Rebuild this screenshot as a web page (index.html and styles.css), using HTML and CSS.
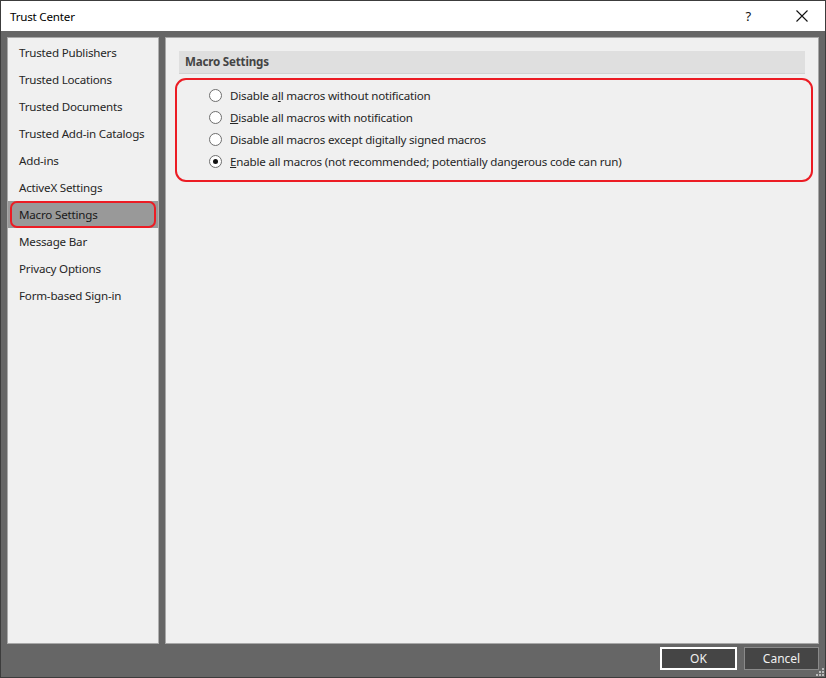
FILE: index.html
```html
<!DOCTYPE html>
<html>
<head>
<meta charset="utf-8">
<link rel="stylesheet" href="styles.css">
</head>
<body>
<div class="window">
  <div class="titlebar">
    <span class="title">Trust Center</span>
    <span class="tb-btns"><span class="help">?</span><svg class="close" width="12" height="12" viewBox="0 0 12 12"><path d="M0.5 0.5L11.5 11.5M11.5 0.5L0.5 11.5" stroke="#111" stroke-width="1.1"/></svg></span>
  </div>
  <div class="body">
    <div class="panes">
      <ul class="nav">
        <li>Trusted Publishers</li>
        <li>Trusted Locations</li>
        <li>Trusted Documents</li>
        <li>Trusted Add-in Catalogs</li>
        <li>Add-ins</li>
        <li>ActiveX Settings</li>
        <li class="sel"><span class="mark"></span>Macro Settings</li>
        <li>Message Bar</li>
        <li>Privacy Options</li>
        <li>Form-based Sign-in</li>
      </ul>
      <div class="content">
        <div class="section-head">Macro Settings</div>
        <div class="options">
          <label class="opt"><span class="radio"></span>Disable a<u>l</u>l macros without notification</label>
          <label class="opt"><span class="radio"></span><u>D</u>isable all macros with notification</label>
          <label class="opt"><span class="radio"></span>Disable all macros except digitally signed macros</label>
          <label class="opt"><span class="radio on"></span><u>E</u>nable all macros (not recommended; potentially dangerous code can run)</label>
        </div>
      </div>
    </div>
    <div class="footer">
      <button class="btn ok">OK</button>
      <button class="btn">Cancel</button>
    </div>
    <svg class="grip" width="8" height="8" viewBox="0 0 8 8"><g fill="#bbb"><rect x="6" y="0" width="2" height="2"/><rect x="3" y="3" width="2" height="2"/><rect x="6" y="3" width="2" height="2"/><rect x="0" y="6" width="2" height="2"/><rect x="3" y="6" width="2" height="2"/><rect x="6" y="6" width="2" height="2"/></g></svg>
  </div>
</div>
</body>
</html>
```

FILE: styles.css
```css
html, body {
  margin: 0;
  padding: 0;
}
body {
  font-family: "Segoe UI", "Noto Sans", "Open Sans", sans-serif;
  font-size: 11.6px;
  letter-spacing: -0.2px;
  color: #262626;
}
.window {
  width: 826px;
  height: 678px;
  box-sizing: border-box;
  border: 1px solid #3c3c3c;
  display: flex;
  flex-direction: column;
  background: #666;
}
.titlebar {
  height: 30px;
  background: #fff;
  display: flex;
  align-items: center;
  justify-content: space-between;
  padding-left: 9px;
  padding-right: 17px;
  flex: none;
}
.title {
  font-size: 11.6px;
  color: #000;
}
.tb-btns {
  display: flex;
  align-items: center;
  gap: 45px;
}
.help {
  font-size: 13px;
  color: #111;
}
.body {
  flex: 1;
  position: relative;
  background: #666;
  padding: 6px 6px 0 6px;
  display: flex;
  flex-direction: column;
}
.panes {
  display: flex;
  gap: 6px;
  height: 607px;
}
.nav {
  list-style: none;
  margin: 0;
  padding: 1px 0 0 0;
  width: 150px;
  background: #f0f0f0;
  border: 1px solid #a8a8a8;
  border-right-color: #b0b0b0;
}
.nav li {
  height: 27px;
  line-height: 27px;
  padding-left: 11px;
  position: relative;
}
.nav li.sel {
  background: #999;
  color: #1a1a1a;
}
.mark {
  position: absolute;
  left: 2px;
  top: 0;
  width: 142px;
  height: 23px;
  border: 2px solid #ec1c24;
  border-radius: 7px;
}
.content {
  flex: 1;
  background: #f0f0f0;
  border: 1px solid #a8a8a8;
  padding: 13px 13px;
}
.section-head {
  height: 22px;
  line-height: 22px;
  background: #dfdfdf;
  border-bottom: 1px solid #d2d2d2;
  padding-left: 6px;
  font-weight: bold;
  color: #444;
}
.options {
  margin: 4px -8px 0 -4px;
  border: 2px solid #ec1c24;
  border-radius: 11px;
  padding: 4px 0 8px 32px;
  display: flex;
  flex-direction: column;
}
.opt {
  height: 22px;
  display: flex;
  align-items: center;
  color: #262626;
}
.opt u {
  text-decoration-thickness: 1px;
}
.radio {
  width: 11px;
  height: 11px;
  border: 1px solid #6e6e6e;
  border-radius: 50%;
  background: #fff;
  margin-right: 8px;
  position: relative;
  flex: none;
}
.radio.on::after {
  content: "";
  position: absolute;
  left: 3px;
  top: 3px;
  width: 5px;
  height: 5px;
  border-radius: 50%;
  background: #111;
}
.footer {
  display: flex;
  justify-content: flex-end;
  gap: 7px;
  padding-top: 3px;
}
.btn {
  font-family: inherit;
  font-size: 12px;
  color: #f0f0f0;
  background: #454545;
  width: 75px;
  height: 23px;
  border: 1px solid #8a8a8a;
  padding: 0;
}
.btn.ok {
  width: 77px;
  border: 2px solid #fff;
}
.grip {
  position: absolute;
  right: 1px;
  bottom: 1px;
}
```
